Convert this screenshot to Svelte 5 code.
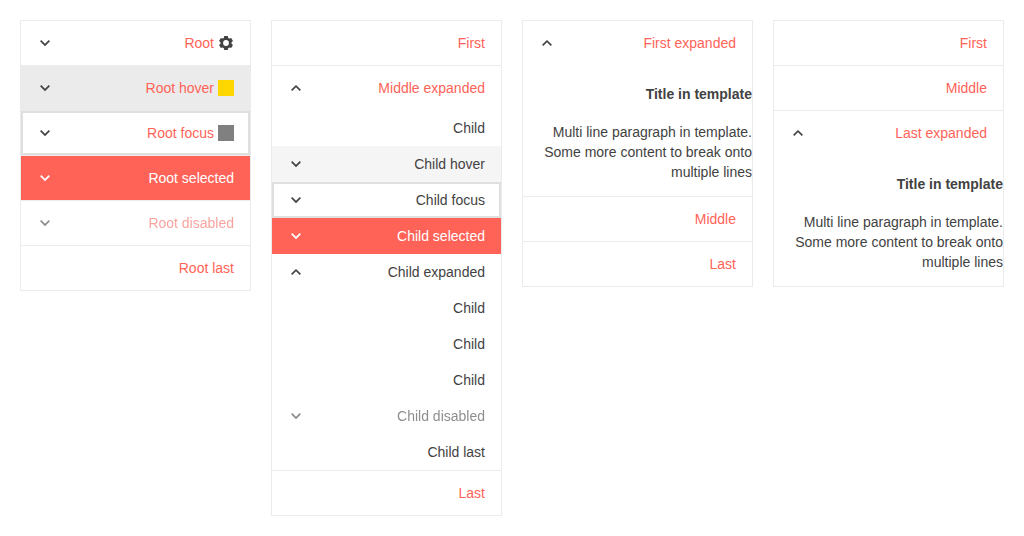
<script>
  const leaf = (text) => ({ text });
  const teeth = [0, 60, 120, 180, 240, 300];

  let panels = $state([
    [
      { text: 'Root', arrow: true, icon: 'gear' },
      { text: 'Root hover', arrow: true, status: 'hover', swatch: 'gold' },
      { text: 'Root focus', arrow: true, status: 'focus', swatch: 'gray' },
      { text: 'Root selected', arrow: true, status: 'selected' },
      { text: 'Root disabled', arrow: true, status: 'disabled' },
      leaf('Root last'),
    ],
    [
      leaf('First'),
      {
        text: 'Middle expanded',
        arrow: true,
        expanded: true,
        items: [
          leaf('Child'),
          { text: 'Child hover', arrow: true, status: 'hover' },
          { text: 'Child focus', arrow: true, status: 'focus' },
          { text: 'Child selected', arrow: true, status: 'selected' },
          {
            text: 'Child expanded',
            arrow: true,
            expanded: true,
            items: [leaf('Child'), leaf('Child'), leaf('Child')],
          },
          { text: 'Child disabled', arrow: true, status: 'disabled' },
          leaf('Child last'),
        ],
      },
      leaf('Last'),
    ],
    [
      { text: 'First expanded', arrow: true, expanded: true, template: true },
      leaf('Middle'),
      leaf('Last'),
    ],
    [
      leaf('First'),
      leaf('Middle'),
      { text: 'Last expanded', arrow: true, expanded: true, template: true },
    ],
  ]);

  function toggle(item) {
    if (item.items || item.template) item.expanded = !item.expanded;
  }
</script>

{#snippet row(item)}
  <button
    type="button"
    class="link {item.status ?? ''}"
    disabled={item.status === 'disabled'}
    aria-expanded={item.arrow ? !!item.expanded : undefined}
    onclick={() => toggle(item)}
  >
    {#if item.icon === 'gear'}
      <svg class="icon" viewBox="0 0 16 16" aria-hidden="true">
        <path
          fill-rule="evenodd"
          d="M8 2.5a5.5 5.5 0 1 1 0 11 5.5 5.5 0 0 1 0-11zm0 2.6a2.9 2.9 0 1 0 0 5.8 2.9 2.9 0 0 0 0-5.8z"
        />
        {#each teeth as angle}
          <path d="M6.2 1h3.6l.6 3.3H5.6z" transform="rotate({angle} 8 8)" />
        {/each}
      </svg>
    {/if}
    {#if item.swatch}
      <span class="swatch {item.swatch}"></span>
    {/if}
    <span class="text">{item.text}</span>
    {#if item.arrow}
      <svg class="icon arrow" viewBox="0 0 512 512" aria-hidden="true">
        {#if item.expanded}
          <path d="M256 156l158 158-37 37-121-121-121 121-37-37z" />
        {:else}
          <path d="M256 356L98 198l37-37 121 121 121-121 37 37z" />
        {/if}
      </svg>
    {/if}
  </button>
{/snippet}

{#snippet children(items)}
  <ul class="group">
    {#each items as item}
      <li>
        {@render row(item)}
        {#if item.items && item.expanded}
          {@render children(item.items)}
        {/if}
      </li>
    {/each}
  </ul>
{/snippet}

<main>
  {#each panels as panel}
    <ul class="panelbar" dir="rtl">
      {#each panel as item}
        <li class="root">
          {@render row(item)}
          {#if item.items && item.expanded}
            {@render children(item.items)}
          {/if}
          {#if item.template && item.expanded}
            <div class="content">
              <h4>Title in template</h4>
              <p>Multi line paragraph in template. Some more content to break onto multiple lines</p>
            </div>
          {/if}
        </li>
      {/each}
    </ul>
  {/each}
</main>

<style>
  :global(body) {
    margin: 0;
    background: #fff;
  }

  main {
    display: grid;
    grid-template-columns: repeat(4, minmax(0, 1fr));
    align-items: start;
    gap: 20px;
    padding: 20px;
    font-family: 'Liberation Sans', Arial, sans-serif;
    font-size: 14px;
    line-height: 20px;
    color: #424242;
  }

  ul {
    margin: 0;
    padding: 0;
    list-style: none;
  }

  .panelbar {
    border: 1px solid #ebebeb;
    background: #fff;
  }

  .root + .root {
    border-top: 1px solid #ebebeb;
  }

  .link {
    display: flex;
    align-items: center;
    gap: 4px;
    box-sizing: border-box;
    width: 100%;
    margin: 0;
    padding: 8px 16px;
    border: 0;
    outline: 0;
    background: transparent;
    color: inherit;
    font: inherit;
    text-align: start;
    cursor: pointer;
  }

  .root > .link {
    padding: 12px 16px;
    color: #ff6358;
  }

  .icon {
    flex: none;
    width: 16px;
    height: 16px;
    fill: #424242;
  }

  .arrow {
    margin-inline-start: auto;
  }

  .swatch {
    flex: none;
    width: 16px;
    height: 16px;
  }

  .gold {
    background: #ffd700;
  }

  .gray {
    background: #808080;
  }

  .link.hover {
    background: #f5f5f5;
  }

  .root > .link.hover {
    background: #ebebeb;
  }

  .link.focus,
  .link:focus-visible {
    box-shadow: inset 0 0 0 2px #dfdfdf;
  }

  .link.selected,
  .root > .link.selected {
    background: #ff6358;
    color: #fff;
  }

  .selected .icon {
    fill: #fff;
  }

  .link.disabled {
    opacity: 0.6;
    filter: grayscale(0.1);
    cursor: default;
  }

  .content h4 {
    margin: 0;
    padding: 19px 0 18px;
    font-size: 14px;
    font-weight: 700;
  }

  .content p {
    margin: 0;
    padding-bottom: 14px;
  }
</style>
